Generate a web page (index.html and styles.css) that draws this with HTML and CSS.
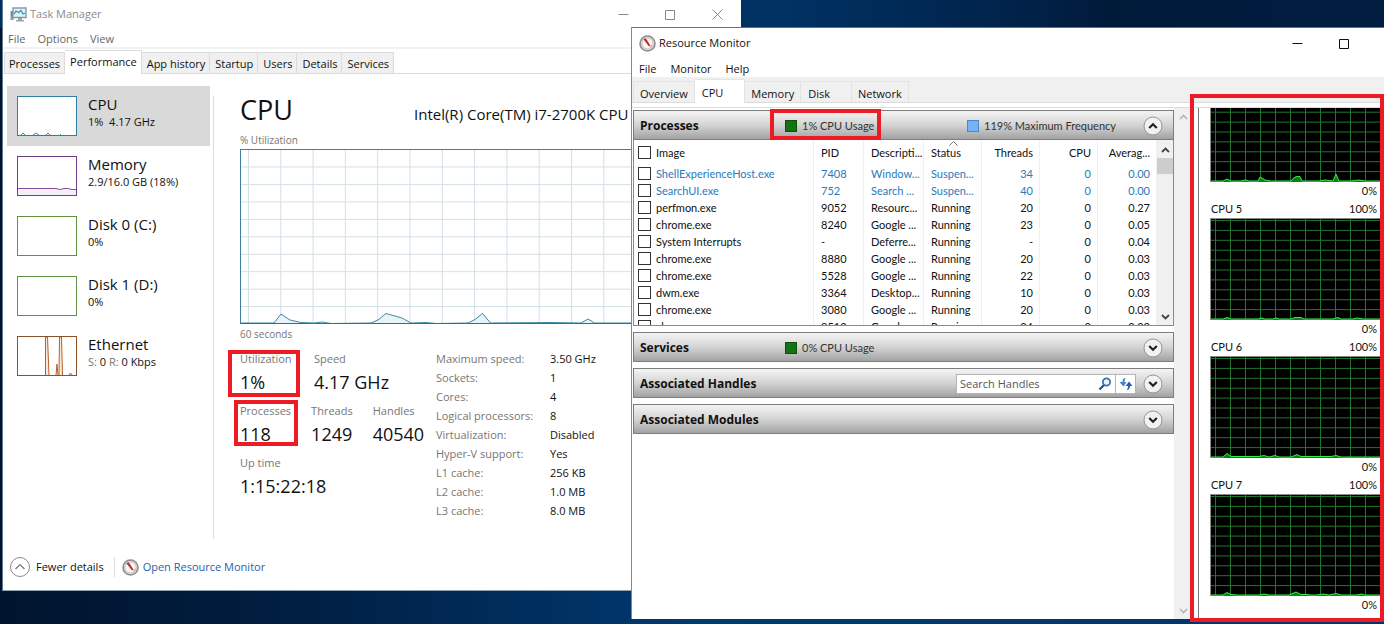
FILE: index.html
```html
<!DOCTYPE html>
<html lang="en">
<head>
    <meta charset="UTF-8">
    <meta name="viewport" content="width=device-width, initial-scale=1.0">
    <title>Task Manager</title>
    <link rel="stylesheet" href="styles.css">
</head>
<body>

<!-- shared symbols -->
<svg class="defs" width="0" height="0" aria-hidden="true">
    <defs>
        <pattern id="tmGrid" x="7" y="0" width="32.3" height="17.45" patternUnits="userSpaceOnUse">
            <path d="M0.5 0V17.45M0 17H32.3" fill="none" stroke="#d3dfe6"/>
        </pattern>
        <pattern id="coreGrid" x="4" y="1" width="15" height="10" patternUnits="userSpaceOnUse">
            <path d="M0.5 0V10M0 0.5H15" fill="none" stroke="#22752c"/>
        </pattern>
        <symbol id="gauge" viewBox="0 0 17 17">
            <circle cx="8.5" cy="8.5" r="7.5" fill="#e6e6e4" stroke="#8d8d8d" stroke-width="1.6"/>
            <circle cx="8.5" cy="8.5" r="5.6" fill="#fbfafa" stroke="#c9b4ae"/>
            <path d="M4.2 4L7 3.6 11.4 10.6 10 11.6z" fill="#c22b2b"/>
            <path d="M11 12.5l2-2.5" stroke="#e0a49a" stroke-width="1.2"/>
        </symbol>
        <symbol id="chevDown" viewBox="0 0 20 20">
            <circle cx="10" cy="10" r="9" fill="#f1f1f1" stroke="#969696"/>
            <path d="M6.2 8L10 11.8 13.8 8" fill="none" stroke="#222" stroke-width="2.2"/>
        </symbol>
        <symbol id="chevUp" viewBox="0 0 20 20">
            <circle cx="10" cy="10" r="9" fill="#f1f1f1" stroke="#969696"/>
            <path d="M6.2 12L10 8.2 13.8 12" fill="none" stroke="#222" stroke-width="2.2"/>
        </symbol>
        <symbol id="minimize" viewBox="0 0 11 11"><path d="M0.5 5.5h10" fill="none" stroke="currentColor"/></symbol>
        <symbol id="maximize" viewBox="0 0 11 11"><path d="M0.5 1.5h9v9h-9z" fill="none" stroke="currentColor"/></symbol>
        <symbol id="close" viewBox="0 0 11 11"><path d="M0.5 0.5l10 10M10.5 0.5l-10 10" fill="none" stroke="currentColor"/></symbol>
    </defs>
</svg>

<div class="desktop">

    <!-- Task Manager -->
    <section class="window task-manager">
        <header class="title-bar">
            <svg class="app-icon" width="17" height="15" viewBox="0 0 17 15">
                <path d="M0.5 4h3v9h-3z" fill="#8b9a92"/>
                <path d="M1 4.500h1.500v4H1z" fill="#4f9a4f"/>
                <path d="M3 1h13v9.5H3z" fill="#dff3fb" stroke="#8d989e" stroke-width="1.4"/>
                <path d="M4 7l2-3 2.5 1.5L11 3.5 13 7l2-1" fill="none" stroke="#2c8fb8" stroke-width="1.2"/>
                <path d="M8 11h4v2h2v1.5H6V13h2z" fill="#9aa4a9"/>
            </svg>
            <h1 class="window-title">Task Manager</h1>
            <div class="window-controls">
                <button class="control" aria-label="Minimize"><svg width="11" height="11"><use href="#minimize"/></svg></button>
                <button class="control" aria-label="Maximize"><svg width="11" height="11"><use href="#maximize"/></svg></button>
                <button class="control" aria-label="Close"><svg width="11" height="11"><use href="#close"/></svg></button>
            </div>
        </header>
        <nav class="menu">
            <button>File</button>
            <button>Options</button>
            <button>View</button>
        </nav>
        <nav class="tabs">
            <button class="tab">Processes</button>
            <button class="tab active">Performance</button>
            <button class="tab">App history</button>
            <button class="tab">Startup</button>
            <button class="tab">Users</button>
            <button class="tab">Details</button>
            <button class="tab">Services</button>
        </nav>

        <div class="tm-body">
            <aside class="sidebar">
                <button class="resource selected">
                    <svg class="thumb cpu" viewBox="0 0 58 38"><path d="M3 38l2-2 2 2M15 38l3-2 3 2M28 38l2-2 2 2M42 37.500h1" fill="none" stroke="#2a8dbd"/></svg>
                    <span class="resource-text"><span class="resource-name">CPU</span><span class="resource-value">1%&nbsp; 4.17 GHz</span></span>
                </button>
                <button class="resource">
                    <svg class="thumb memory" viewBox="0 0 58 38"><path d="M0 31.500H38L42 32.500 46 31.500 50 31.500 54 32.500H58V38H0z" fill="#f4eef7"/><path d="M0 31.500H38L42 32.500 46 31.500 50 31.500 54 32.500H58" fill="none" stroke="#8a4ba0"/></svg>
                    <span class="resource-text"><span class="resource-name">Memory</span><span class="resource-value">2.9/16.0 GB (18%)</span></span>
                </button>
                <button class="resource">
                    <svg class="thumb disk" viewBox="0 0 58 38"></svg>
                    <span class="resource-text"><span class="resource-name">Disk 0 (C:)</span><span class="resource-value">0%</span></span>
                </button>
                <button class="resource">
                    <svg class="thumb disk" viewBox="0 0 58 38"></svg>
                    <span class="resource-text"><span class="resource-name">Disk 1 (D:)</span><span class="resource-value">0%</span></span>
                </button>
                <button class="resource">
                    <svg class="thumb ethernet" viewBox="0 0 58 38">
                        <path d="M27.500 38V0h2l1.500 38M41 38L41.500 0h2l1 38M38 38l1-11 1 11M51 38l1.500-2 1.500 2" fill="#f7e8dc" stroke="#b4622a"/>
                    </svg>
                    <span class="resource-text"><span class="resource-name">Ethernet</span><span class="resource-value"><i>S:</i> 0 <i>R:</i> 0 Kbps</span></span>
                </button>
            </aside>

            <main class="cpu-view">
                <div class="cpu-head">
                    <h2>CPU</h2>
                    <p>Intel(R) Core(TM) i7-2700K CPU</p>
                </div>
                <p class="chart-label">% Utilization</p>
                <svg class="cpu-chart" height="175">
                    <rect width="100%" height="175" fill="url(#tmGrid)"/>
                    <path d="M0 173L10 173 33 173 40 164 49 170 60 172.500 73 173 81 172 90 173.500 130 173 137 170 145 163.500 161 168 170 173 185 172.500 195 173.500 227 173 234 169.500 241.500 163.500 249.500 173 308 172.500 340 173 347 169 353.500 173H480V175H0z" fill="#e8f3f8" stroke="#3b8aa8"/>
                    <path d="M0 173.500H480" stroke="#2d6f8e"/>
                </svg>
                <p class="chart-label">60 seconds</p>

                <div class="stats">
                    <div class="stat-groups">
                        <div class="stat-row wide">
                            <dl><dt>Utilization</dt><dd>1%</dd></dl>
                            <dl><dt>Speed</dt><dd>4.17 GHz</dd></dl>
                        </div>
                        <div class="stat-row">
                            <dl><dt>Processes</dt><dd>118</dd></dl>
                            <dl><dt>Threads</dt><dd>1249</dd></dl>
                            <dl><dt>Handles</dt><dd>40540</dd></dl>
                        </div>
                        <div class="stat-row">
                            <dl><dt>Up time</dt><dd>1:15:22:18</dd></dl>
                        </div>
                    </div>
                    <dl class="specs">
                        <dt>Maximum speed:</dt><dd>3.50 GHz</dd>
                        <dt>Sockets:</dt><dd>1</dd>
                        <dt>Cores:</dt><dd>4</dd>
                        <dt>Logical processors:</dt><dd>8</dd>
                        <dt>Virtualization:</dt><dd>Disabled</dd>
                        <dt>Hyper-V support:</dt><dd>Yes</dd>
                        <dt>L1 cache:</dt><dd>256 KB</dd>
                        <dt>L2 cache:</dt><dd>1.0 MB</dd>
                        <dt>L3 cache:</dt><dd>8.0 MB</dd>
                    </dl>
                </div>
            </main>
        </div>

        <footer class="tm-footer">
            <button class="fewer">
                <svg width="20" height="20" viewBox="0 0 20 20"><circle cx="10" cy="10" r="9.500" fill="#fff" stroke="#8a8a8a"/><path d="M5.500 12L10 7.500 14.500 12" fill="none" stroke="#777" stroke-width="1.2"/></svg>
                Fewer details
            </button>
            <a class="open-monitor" href="#">
                <svg width="17" height="17"><use href="#gauge"/></svg>
                Open Resource Monitor
            </a>
        </footer>
    </section>

    <!-- Resource Monitor -->
    <section class="window resource-monitor">
        <header class="title-bar">
            <svg class="app-icon" width="17" height="17"><use href="#gauge"/></svg>
            <h1 class="window-title">Resource Monitor</h1>
            <div class="window-controls">
                <button class="control" aria-label="Minimize"><svg width="11" height="11"><use href="#minimize"/></svg></button>
                <button class="control" aria-label="Maximize"><svg width="11" height="11"><use href="#maximize"/></svg></button>
            </div>
        </header>
        <nav class="menu">
            <button>File</button>
            <button>Monitor</button>
            <button>Help</button>
        </nav>
        <nav class="tabs">
            <button class="tab">Overview</button>
            <button class="tab roomy active">CPU</button>
            <button class="tab">Memory</button>
            <button class="tab roomy">Disk</button>
            <button class="tab">Network</button>
        </nav>

        <div class="rm-body">
            <div class="panels">
                <section class="panel">
                    <header class="panel-head">
                        <h2>Processes</h2>
                        <span class="legend"><i class="swatch green"></i>1% CPU Usage</span>
                        <span class="legend"><i class="swatch blue"></i>119% Maximum Frequency</span>
                        <button class="toggle" aria-label="Collapse Processes"><svg width="20" height="20"><use href="#chevUp"/></svg></button>
                    </header>
                    <div class="process-list">
                        <table>
                            <colgroup>
                                <col><col class="c-pid"><col class="c-desc"><col class="c-num"><col class="c-num"><col class="c-num"><col class="c-avg">
                            </colgroup>
                            <thead>
                                <tr>
                                    <th><label><input type="checkbox">Image</label></th><th>PID</th><th>Descripti...</th>
                                    <th>Status<svg class="sort" width="9" height="5" viewBox="0 0 9 5"><path d="M0.500 4.500l4-4 4 4" fill="none" stroke="#777"/></svg></th>
                                    <th>Threads</th><th>CPU</th><th>Averag...</th>
                                </tr>
                            </thead>
                            <tbody>
                                <tr class="suspended"><td><label><input type="checkbox">ShellExperienceHost.exe</label></td><td>7408</td><td>Window...</td><td>Suspen...</td><td>34</td><td>0</td><td>0.00</td></tr>
                                <tr class="suspended"><td><label><input type="checkbox">SearchUI.exe</label></td><td>752</td><td>Search ...</td><td>Suspen...</td><td>40</td><td>0</td><td>0.00</td></tr>
                                <tr><td><label><input type="checkbox">perfmon.exe</label></td><td>9052</td><td>Resourc...</td><td>Running</td><td>20</td><td>0</td><td>0.27</td></tr>
                                <tr><td><label><input type="checkbox">chrome.exe</label></td><td>8240</td><td>Google ...</td><td>Running</td><td>23</td><td>0</td><td>0.05</td></tr>
                                <tr><td><label><input type="checkbox">System Interrupts</label></td><td>-</td><td>Deferre...</td><td>Running</td><td>-</td><td>0</td><td>0.04</td></tr>
                                <tr><td><label><input type="checkbox">chrome.exe</label></td><td>8880</td><td>Google ...</td><td>Running</td><td>20</td><td>0</td><td>0.03</td></tr>
                                <tr><td><label><input type="checkbox">chrome.exe</label></td><td>5528</td><td>Google ...</td><td>Running</td><td>22</td><td>0</td><td>0.03</td></tr>
                                <tr><td><label><input type="checkbox">dwm.exe</label></td><td>3364</td><td>Desktop...</td><td>Running</td><td>10</td><td>0</td><td>0.03</td></tr>
                                <tr><td><label><input type="checkbox">chrome.exe</label></td><td>3080</td><td>Google ...</td><td>Running</td><td>20</td><td>0</td><td>0.03</td></tr>
                                <tr><td><label><input type="checkbox">chrome.exe</label></td><td>8512</td><td>Google ...</td><td>Running</td><td>24</td><td>0</td><td>0.03</td></tr>
                            </tbody>
                        </table>
                        <div class="scrollbar">
                            <svg width="9" height="6" viewBox="0 0 9 6"><path d="M1 5l3.500-3.500L8 5" fill="none" stroke="#444" stroke-width="1.8"/></svg>
                            <span class="scroll-thumb"></span>
                            <svg class="down" width="9" height="6" viewBox="0 0 9 6"><path d="M1 1l3.500 3.500L8 1" fill="none" stroke="#444" stroke-width="1.8"/></svg>
                        </div>
                    </div>
                </section>

                <section class="panel">
                    <header class="panel-head">
                        <h2>Services</h2>
                        <span class="legend"><i class="swatch green"></i>0% CPU Usage</span>
                        <button class="toggle" aria-label="Expand Services"><svg width="20" height="20"><use href="#chevDown"/></svg></button>
                    </header>
                </section>

                <section class="panel">
                    <header class="panel-head">
                        <h2>Associated Handles</h2>
                        <form class="search">
                            <input type="text" placeholder="Search Handles" aria-label="Search Handles">
                            <button type="button" aria-label="Search"><svg width="14" height="14" viewBox="0 0 14 14"><path d="M1.500 12.500L6 8" stroke="#2b5797" stroke-width="2.4"/><circle cx="8.500" cy="5" r="3.600" fill="#eef6fd" stroke="#3a72b5" stroke-width="1.8"/></svg></button>
                            <button type="button" class="refresh" aria-label="Refresh"><svg width="14" height="14" viewBox="0 0 14 14"><path d="M6.500 1C4 1 3.500 3 3.500 5H0.500L4.500 9.500 7.500 5H5.500C5.500 3 6 2 6.500 1z" fill="#3f86c6"/><path d="M7.500 13C10 13 11 11 11 9H13.500L10 4.500 6.500 9H9C9 11 8.500 12 7.500 13z" fill="#2b5fa5"/></svg></button>
                        </form>
                        <button class="toggle" aria-label="Expand Associated Handles"><svg width="20" height="20"><use href="#chevDown"/></svg></button>
                    </header>
                </section>

                <section class="panel">
                    <header class="panel-head">
                        <h2>Associated Modules</h2>
                        <button class="toggle" aria-label="Expand Associated Modules"><svg width="20" height="20"><use href="#chevDown"/></svg></button>
                    </header>
                </section>
            </div>

            <div class="scrollbar outer">
                <svg width="9" height="6" viewBox="0 0 9 6"><path d="M1 5l3.500-3.500L8 5" fill="none" stroke="#b4b4b4" stroke-width="1.6"/></svg>
                <svg class="down" width="9" height="6" viewBox="0 0 9 6"><path d="M1 1l3.500 3.500L8 1" fill="none" stroke="#b4b4b4" stroke-width="1.6"/></svg>
            </div>

            <aside class="cores">
                <div class="core">
                    <svg class="core-chart" viewBox="0 0 169 102" preserveAspectRatio="none">
                        <rect width="169" height="102" fill="url(#coreGrid)"/>
                        <path d="M0 101H12L16 99 20 101H30L34 100 38 101H47L49 97 54 100 60 101H80L83 97.500 86 96.500H89L91 101H108L114 100 122 101 125 94 128 101H140L148 100 154 101H169" fill="#0b7d17" stroke="#35f04a"/>
                    </svg>
                    <p><span>0%</span></p>
                </div>
                <div class="core">
                    <p><span>CPU 5</span><span>100%</span></p>
                    <svg class="core-chart" viewBox="0 0 169 102" preserveAspectRatio="none">
                        <rect width="169" height="102" fill="url(#coreGrid)"/>
                        <path d="M0 101H12L16 99.500 20 101H47L51 100 54 101H62L65 100 68 101H80L84 99.500H90L93 101H122L127 99.500 130 101H142L146 100 152 101H169" fill="#0b7d17" stroke="#35f04a"/>
                    </svg>
                    <p><span>0%</span></p>
                </div>
                <div class="core">
                    <p><span>CPU 6</span><span>100%</span></p>
                    <svg class="core-chart" viewBox="0 0 169 102" preserveAspectRatio="none">
                        <rect width="169" height="102" fill="url(#coreGrid)"/>
                        <path d="M0 101H12L16 97.500 20 100.500H48L53 99.500 58 101 64 99.500 68 101H80L86 98.500 90 100.500H120L125 99.500 130 101H169" fill="#0b7d17" stroke="#35f04a"/>
                    </svg>
                    <p><span>0%</span></p>
                </div>
                <div class="core">
                    <p><span>CPU 7</span><span>100%</span></p>
                    <svg class="core-chart" viewBox="0 0 169 102" preserveAspectRatio="none">
                        <rect width="169" height="102" fill="url(#coreGrid)"/>
                        <path d="M0 101H12L16 98.500 20 100.500 26 101H48L53 100 58 101H78L85 98 90 100.500H96L100 101H106L112 100 118 101 125 99.500 130 101H146L150 100 154 101H169" fill="#0b7d17" stroke="#35f04a"/>
                    </svg>
                    <p><span>0%</span></p>
                </div>
            </aside>
        </div>
    </section>

    <!-- red highlight frames -->
    <div class="mark mark-utilization"></div>
    <div class="mark mark-processes"></div>
    <div class="mark mark-usage"></div>
    <div class="mark mark-cores"></div>
</div>

</body>
</html>
```
FILE: styles.css
```css
* {
    box-sizing: border-box;
}
body {
    margin: 0;
    font-family: "Open Sans", "Noto Sans", sans-serif;
    font-size: 11px;
    line-height: 16px;
    color: #111;
}
h1, h2, p, dl, dd {
    margin: 0;
    font-weight: 400;
}
button, input {
    font: inherit;
    color: inherit;
}
button {
    border: none;
    background: none;
    padding: 0;
}
svg {
    display: block;
    flex: none;
}
.defs {
    position: absolute;
}
.desktop {
    position: relative;
    min-height: 100vh;
    overflow: hidden;
    background:
        linear-gradient(90deg, #003060 0%, #003264 56%, #00244c 72%, #001a3a 80%, #001d40 100%) 0 0 / 100% 28px no-repeat,
        linear-gradient(90deg, #00142e 0%, #001f42 22%, #003060 40%, #003a72 50%, #00366c 100%);
}

/* windows */
.window {
    position: absolute;
    display: flex;
    flex-direction: column;
    background: #fff;
}
.task-manager {
    top: 0;
    left: 2px;
    bottom: 33px;
    width: 739px;
    border-left: 1px solid #5c7890;
    border-bottom: 1px solid #8fa3b3;
}
.resource-monitor {
    top: 27px;
    left: 631px;
    right: 0;
    bottom: 5px;
    border-top: 1px solid #3f7ca0;
    border-left: 1px solid #5b97b5;
}
.title-bar {
    display: flex;
    align-items: center;
    height: 28px;
    padding-left: 7px;
}
.resource-monitor .title-bar {
    height: 30px;
    padding-right: 16px;
}
.window-title {
    margin-left: 3px;
    font-size: 11px;
}
.task-manager .window-title {
    color: #8c8c8c;
}
.window-controls {
    display: flex;
    margin-left: auto;
}
.control {
    display: flex;
    justify-content: center;
    width: 47px;
}
.task-manager .control {
    color: #888;
}
.menu {
    display: flex;
    gap: 12px;
    height: 21px;
    padding-top: 2px;
    padding-left: 5px;
    border-bottom: 2px solid #f2f2f2;
    color: #666;
}
.resource-monitor .menu {
    gap: 14px;
    height: 19px;
    padding-left: 7px;
    border: none;
    color: #111;
}

/* tabs */
.tabs {
    display: flex;
    align-items: flex-end;
    height: 25px;
    padding-left: 1px;
    border-bottom: 1px solid #dcdcdc;
}
.tab {
    height: 21px;
    padding: 1px 4px 0 5px;
    background: #f0f0f0;
    border: 1px solid #dcdcdc;
    border-left: none;
    border-bottom: none;
}
.tab:first-child {
    padding-left: 4px;
    border-left: 1px solid #dcdcdc;
}
.tab.active {
    height: 24px;
    margin-bottom: -1px;
    padding-bottom: 2px;
    background: #fff;
}
.resource-monitor .tabs {
    height: 26px;
    background: #f0f0f0;
}
.resource-monitor .tab {
    padding: 4px 6px 0 6px;
    border-color: #e4e4e4;
    text-align: left;
}
.resource-monitor .tab.roomy {
    padding: 4px 21px 0 7px;
}
.resource-monitor .tab.active {
    padding-bottom: 2px;
}

/* task manager body */
.tm-body {
    display: flex;
    flex: 1;
    padding: 12px 19px 0 4px;
}
.sidebar {
    width: 203px;
}
.resource {
    display: flex;
    align-items: center;
    width: 100%;
    height: 60px;
    padding-left: 10px;
    text-align: left;
}
.resource.selected {
    background: #d9d9d9;
}
.thumb {
    width: 60px;
    height: 40px;
    border: 1px solid;
    background: #fff;
}
.thumb.cpu { border-color: #2f7ea6; }
.thumb.memory { border-color: #6f3f85; }
.thumb.disk { border-color: #5f9340; }
.thumb.ethernet { border-color: #8a5226; }
.resource-text {
    display: flex;
    flex-direction: column;
    margin-left: 11px;
    padding-bottom: 8px;
}
.resource-name {
    font-size: 15px;
    line-height: 20px;
}
.resource-value i {
    font-style: normal;
    color: #777;
}
.cpu-view {
    flex: 1;
    min-width: 0;
    margin: 10px 0 12px 3px;
    padding-left: 26px;
    border-left: 1px solid #dcdcdc;
}
.cpu-head {
    display: flex;
    align-items: center;
    height: 36px;
    white-space: nowrap;
}
.cpu-head h2 {
    flex: 0 0 174px;
    margin-bottom: 8px;
    font-size: 27px;
    line-height: 36px;
}
.cpu-head p {
    font-size: 15px;
}
.chart-label {
    font-size: 10px;
    color: #767676;
}
.cpu-chart {
    width: 100%;
    margin: 1px 0 2px;
    border: 1px solid #3b83a3;
    border-right: none;
    border-bottom: none;
}
.stats {
    display: flex;
    gap: 12px;
    padding-top: 7px;
}
.stats dt {
    color: #767676;
}
.stat-groups {
    width: 184px;
}
.stat-row {
    display: flex;
    gap: 20px;
    height: 52px;
}
.stat-row.wide dl {
    min-width: 54px;
}
.stat-row dt {
    line-height: 20px;
}
.stat-row dd {
    font-size: 18px;
    line-height: 26px;
}
.specs {
    display: grid;
    grid-template-columns: 114px auto;
    align-content: start;
    line-height: 19px;
}

.tm-footer {
    display: flex;
    align-items: center;
    height: 32px;
    margin-bottom: 7px;
    padding-left: 7px;
}
.fewer {
    display: flex;
    align-items: center;
    gap: 6px;
    padding-right: 10px;
    border-right: 1px solid #dcdcdc;
}
.open-monitor {
    display: flex;
    align-items: center;
    gap: 4px;
    margin-left: 7px;
    color: #1f62ab;
    text-decoration: none;
}

/* resource monitor body */
.rm-body {
    display: flex;
    flex: 1;
    min-height: 0;
    margin-top: 4px;
    border-top: 1px solid #dcdcdc;
}
.panels {
    display: flex;
    flex: 1;
    flex-direction: column;
    gap: 6px;
    min-width: 0;
    padding: 2px 0 0 1px;
}
.panel-head {
    display: flex;
    align-items: center;
    height: 30px;
    padding: 1px 10px 0 6px;
    border: 1px solid #7d7d7d;
    background: linear-gradient(#f4f4f4, #d4d4d4 50%, #a2a2a2);
}
.panel-head h2 {
    flex: 0 0 145px;
    font-size: 12px;
    font-weight: 700;
}
.legend {
    display: flex;
    flex: none;
    align-items: center;
    gap: 5px;
    width: 182px;
    font-family: Lato, "Open Sans", sans-serif;
    color: #333;
    white-space: nowrap;
}
.legend + .legend {
    width: auto;
}
.swatch {
    width: 12px;
    height: 12px;
    border: 1px solid #0c4f0c;
    background: #127312;
}
.swatch.blue {
    border-color: #4f86c6;
    background: #74b3fa;
}
.toggle {
    margin-left: auto;
}
.process-list {
    display: flex;
    height: 186px;
    overflow: hidden;
    border: 1px solid #8a8a8a;
    border-top: none;
}
table {
    flex: 1;
    width: 100%;
    table-layout: fixed;
    border-collapse: collapse;
    font-family: Lato, "Open Sans", sans-serif;
    white-space: nowrap;
}
.c-pid { width: 50px; }
.c-desc { width: 60px; }
.c-num { width: 58px; }
.c-avg { width: 59px; }
th, td {
    height: 17px;
    padding: 0 0 0 7px;
    border-right: 1px solid #eaf2f9;
    font-weight: 400;
    text-align: left;
}
th {
    position: relative;
    height: 25px;
}
th:nth-child(n+5), td:nth-child(n+5) {
    padding: 0 6px 0 0;
    text-align: right;
}
td:first-child, th:first-child {
    padding-left: 4px;
}
td label, th label {
    display: flex;
    align-items: center;
    gap: 5px;
}
input[type="checkbox"] {
    appearance: none;
    width: 13px;
    height: 13px;
    margin: 0;
    border: 1px solid #333;
    background: #fff;
}
.suspended {
    color: #2a7ab9;
}
.sort {
    position: absolute;
    top: 1px;
    left: 25px;
}
.scrollbar {
    display: flex;
    flex: none;
    flex-direction: column;
    align-items: center;
    gap: 5px;
    width: 16px;
    padding: 7px 0 5px;
    background: #f0f0f0;
}
.scrollbar .down {
    margin-top: auto;
}
.scroll-thumb {
    width: 16px;
    height: 16px;
    background: #cdcdcd;
}
.scrollbar.outer {
    width: 18px;
    padding-top: 6px;
}
.search {
    display: flex;
    align-items: center;
    width: 180px;
    height: 20px;
    margin-left: auto;
    border: 1px solid #b5b5b5;
    background: #fff;
}
.search input {
    flex: 1;
    min-width: 0;
    padding: 0 3px;
    border: none;
    background: none;
}
.search input::placeholder {
    color: #555;
}
.search button {
    display: flex;
    align-items: center;
    justify-content: center;
    width: 20px;
    height: 18px;
}
.search .refresh {
    border-left: 1px solid #b5b5b5;
}
.search + .toggle {
    margin-left: 7px;
}

.cores {
    display: flex;
    flex: none;
    flex-direction: column;
    justify-content: flex-end;
    width: 186px;
    margin-left: 6px;
    padding: 0 4px 5px 11px;
    overflow: hidden;
    border-left: 1px solid #777;
}
.core {
    flex: none;
}
.core p {
    display: flex;
    justify-content: flex-end;
    padding: 0 3px 0 1px;
    font-family: Lato, "Open Sans", sans-serif;
    line-height: 18px;
}
.core p span:first-child:not(:last-child) {
    margin-right: auto;
}
.core-chart {
    width: 100%;
    height: 102px;
    border-top: 1px solid #8a8a8a;
    border-left: 1px solid #8a8a8a;
    background: #000;
}

/* highlight frames drawn over the windows */
.mark {
    position: absolute;
    border: 4px solid #ed1c24;
    pointer-events: none;
}
.mark-utilization {
    top: 350px;
    left: 228px;
    width: 72px;
    height: 47px;
}
.mark-processes {
    top: 400px;
    left: 234px;
    width: 64px;
    height: 46px;
}
.mark-usage {
    top: 109px;
    left: 770px;
    width: 111px;
    height: 31px;
}
.mark-cores {
    top: 94px;
    right: 0;
    bottom: 2px;
    width: 194px;
}
```
